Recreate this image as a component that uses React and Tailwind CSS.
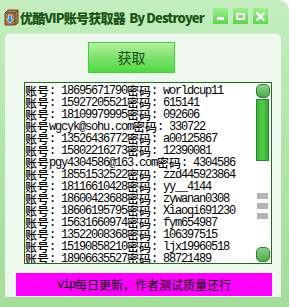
import React from "react";

const rows = [
  ["账号", ": 18695671790", "密码", ": worldcup11"],
  ["账号", ": 15927205521", "密码", ": 615141"],
  ["账号", ": 18109979995", "密码", ": 092606"],
  ["账号", "wgcyk@sohu.com", "密码", ": 330722"],
  ["账号", ": 13526436772", "密码", ": a00125867"],
  ["账号", ": 15802216273", "密码", ": 12390081"],
  ["账号", "pgy4304586@163.com", "密码", ": 4304586"],
  ["账号", ": 18551532522", "密码", ": zzd445923864"],
  ["账号", ": 18116610428", "密码", ": yy__4144"],
  ["账号", ": 18600423688", "密码", ": zywanan0308"],
  ["账号", ": 18606195795", "密码", ": Xiaoqi691230"],
  ["账号", ": 15631660974", "密码", ": fym654987"],
  ["账号", ": 13522008368", "密码", ": 106397515"],
  ["账号", ": 15190858210", "密码", ": ljx19960518"],
  ["账号", ": 18906635527", "密码", ": 88721489"],
];

const cjk = "font-['Noto_Sans_CJK_SC',sans-serif] text-[12px] leading-[12px] font-medium";
const mono = "font-['Liberation_Mono',monospace] text-[12px] leading-[12px] tracking-[-1.2px]";

function WinButton({ children }) {
  return (
    <div className="w-[15px] h-[16px] bg-gradient-to-b from-[#9ef08e] to-[#5cd64c] flex items-center justify-center">
      {children}
    </div>
  );
}

export default function App() {
  return (
    <div className="w-[289px] h-[307px] flex flex-col bg-gradient-to-b from-[#c4eec0] via-[#b2e4aa] to-[#a6dc9c] rounded-tr-[10px] overflow-hidden">
      {/* Title bar */}
      <div className="h-[33px] flex items-start pt-[9px] pl-[4px]">
        <svg width="15" height="17" viewBox="0 0 15 17" className="shrink-0">
          <path d="M1 4 L4 1 L14 1 L14 14 L11 16 L1 16 Z" fill="#a8784a" stroke="#6a4a2a" strokeWidth="1" />
          <path d="M1 4 L11 4 L14 1" fill="none" stroke="#6a4a2a" strokeWidth="1" />
          <path d="M11 4 L11 16" stroke="#6a4a2a" strokeWidth="1" />
          <path d="M4.5 6 L7.5 6 L7.5 10 L9.5 10 L6 14 L2.5 10 L4.5 10 Z" fill="#2a8ee8" stroke="#fff" strokeWidth="0.6" />
        </svg>
        <div className="ml-[1px] mt-[1px] text-[#1a5414] font-black text-[13px] leading-[16px] whitespace-nowrap font-['Noto_Sans_CJK_SC','Liberation_Sans',sans-serif] tracking-[-0.8px]">
          优酷VIP账号获取器&nbsp;&nbsp;By Destroyer
        </div>
        <div className="ml-auto mr-[21px] mt-[-1px] flex gap-[5px]">
          <WinButton>
            <div className="w-[7px] h-[3px] bg-white mt-[4px]" />
          </WinButton>
          <WinButton>
            <div className="w-[9px] h-[7px] border-2 border-white" />
          </WinButton>
          <WinButton>
            <svg width="11" height="11" viewBox="0 0 11 11">
              <path d="M1.5 1.5 L9.5 9.5 M9.5 1.5 L1.5 9.5" stroke="#fff" strokeWidth="2.4" />
            </svg>
          </WinButton>
        </div>
      </div>

      {/* Client panel */}
      <div className="ml-[5px] mr-[8px] h-[264px] bg-[#eef8ee] rounded-tl-[6px] rounded-tr-[6px] border-t border-[#d8f0d4] flex flex-col">
        <div className="pl-[83px] pt-[8px]">
          <button className="w-[87px] h-[31px] border border-[#48cc3c] bg-gradient-to-b from-[#b0f0a0] via-[#7ce26c] to-[#4ed840] text-[#1a4e14] text-[14px] font-['Noto_Sans_CJK_SC',sans-serif] flex items-center justify-center">
            获取
          </button>
        </div>

        {/* List box */}
        <div className="ml-[19px] mt-[9px] w-[248px] h-[182px] border border-[#1e6e1e] bg-white flex">
          <div className="flex-1 pt-[2px] overflow-hidden">
            {rows.map((r, i) => (
              <div key={i} className="h-[12px] leading-[12px] whitespace-nowrap text-black flex items-center">
                <span className={cjk}>{r[0]}</span>
                <span className={mono}>{r[1]}</span>
                <span className={cjk}>{r[2]}</span>
                <span className={mono}>{r[3]}</span>
              </div>
            ))}
          </div>
          {/* Scrollbar */}
          <div className="w-[16px] pt-[1px] pr-[1px] flex flex-col items-center">
            <div className="w-[14px] h-[14px] rounded-[5px] border border-[#2e7e2e] bg-gradient-to-b from-[#8ed08e] to-[#4caa4c]" />
            <div className="w-[13px] h-[62px] mt-[1px] border border-[#2a862a] bg-gradient-to-r from-[#3cb43c] via-[#50cc44] to-[#36a836]" />
            <div className="flex-1 flex flex-col items-center pt-[32px] gap-[4px]">
              <div className="w-[11px] h-[6px] bg-[#b4b4b4]" />
              <div className="w-[11px] h-[6px] bg-[#b4b4b4]" />
              <div className="w-[11px] h-[6px] bg-[#b4b4b4]" />
            </div>
            <div className="w-[14px] h-[15px] mb-[1px] rounded-[5px] border border-[#2e7e2e] bg-gradient-to-b from-[#8ed08e] to-[#4caa4c]" />
          </div>
        </div>

        {/* Notice bar */}
        <div className="ml-[11px] mt-[9px] w-[256px] h-[23px] bg-[#ff00ff] flex items-center justify-center text-black text-[12px] font-['Noto_Sans_CJK_SC',sans-serif]">
          <span className="font-['Liberation_Mono',monospace] tracking-[-1.2px]">vip</span>每日更新，作者测试质量还行
        </div>
      </div>
    </div>
  );
}
